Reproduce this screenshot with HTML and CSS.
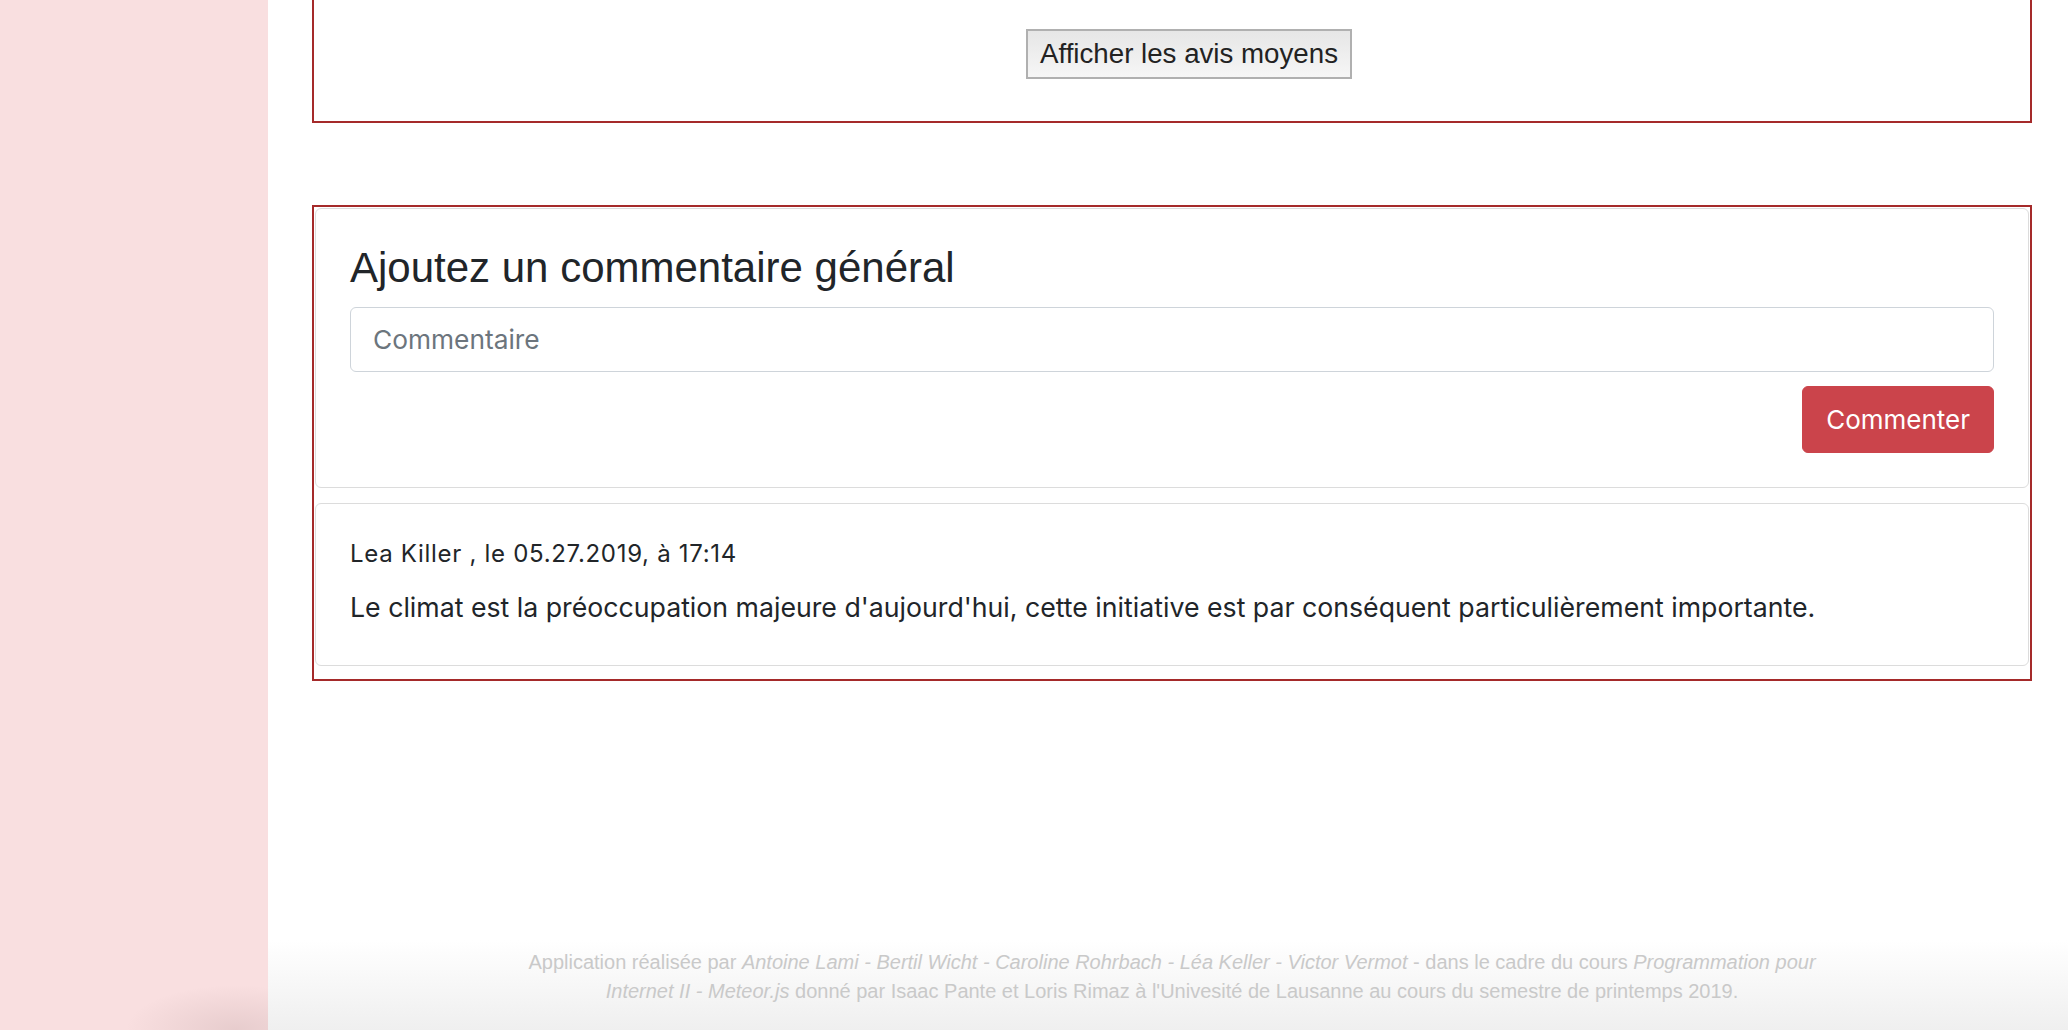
FILE: index.html
```
<!DOCTYPE html>
<html lang="fr">
<head>
<meta charset="utf-8">
<title>Commentaires</title>
<link rel="stylesheet" href="styles.css">
</head>
<body>
<div class="page">
  <aside class="sidebar"></aside>
  <div class="main">
    <section class="box box-top">
      <div class="center-row">
        <button class="legacy-btn" type="button">Afficher les avis moyens</button>
      </div>
    </section>

    <section class="box box-comments">
      <div class="card form-card">
        <h3 class="card-heading">Ajoutez un commentaire général</h3>
        <input class="comment-input" type="text" placeholder="Commentaire">
        <div class="actions">
          <button class="btn-danger" type="button">Commenter</button>
        </div>
      </div>
      <div class="card comment-card">
        <p class="comment-meta">Lea Killer , le 05.27.2019, à 17:14</p>
        <p class="comment-body">Le climat est la préoccupation majeure d'aujourd'hui, cette initiative est par conséquent particulièrement importante.</p>
      </div>
    </section>

    <footer class="site-footer">
      <p class="credits">Application réalisée par <em>Antoine Lami - Bertil Wicht - Caroline Rohrbach - Léa Keller - Victor Vermot</em> - dans le cadre du cours <em>Programmation pour Internet II - Meteor.js</em> donné par Isaac Pante et Loris Rimaz à l'Univesité de Lausanne au cours du semestre de printemps 2019.</p>
    </footer>
  </div>
</div>
</body>
</html>
```

FILE: styles.css
```
* {
  box-sizing: border-box;
}

html, body {
  margin: 0;
  padding: 0;
  height: 100%;
  overflow: hidden;
}

body {
  font-family: "Inter", "Liberation Sans", Arial, sans-serif;
  color: #212529;
  background: #ffffff;
}

.page {
  display: flex;
  min-height: 100vh;
}

.sidebar {
  flex: 0 0 268px;
  background:
    radial-gradient(ellipse 110px 45px at 88% 100%, rgba(120, 90, 90, 0.14), rgba(120, 90, 90, 0) 100%),
    #f9dfe0;
}

.main {
  flex: 1 1 auto;
  display: flex;
  flex-direction: column;
  padding: 0 36px 0 44px;
  min-width: 0;
}

.box {
  border: 2px solid #a52a2a;
}

.box-top {
  margin-top: -40px;
  padding: 67px 0 42px;
}

.center-row {
  display: flex;
  justify-content: center;
  padding-left: 34px;
}

.legacy-btn {
  height: 50px;
  padding: 0 12px;
  font-family: "Liberation Sans", Arial, sans-serif;
  font-size: 27.7px;
  color: #222222;
  border: 2px solid #b0b0b0;
  border-radius: 0;
  background: linear-gradient(#e6e6e6, #f6f6f6);
}

.box-comments {
  margin-top: 82px;
  padding: 1px 1px 13px;
}

.card {
  border: 1px solid #dcdcdc;
  border-radius: 6px;
  background: #ffffff;
}

.form-card {
  padding: 34px 34px 34px;
  margin-bottom: 15px;
}

.card-heading {
  margin: 0 0 14px;
  font-family: "Liberation Sans", Arial, sans-serif;
  font-weight: 400;
  font-size: 42px;
  line-height: 50px;
  color: #212529;
}

.comment-input {
  display: block;
  width: 100%;
  height: 65px;
  padding: 0 22px;
  font-family: "Inter", "Liberation Sans", sans-serif;
  font-size: 26.3px;
  color: #495057;
  border: 1px solid #ced4da;
  border-radius: 6px;
  background: #ffffff;
  outline: none;
}

.comment-input::placeholder {
  color: #6c757d;
}

.actions {
  display: flex;
  justify-content: flex-end;
  margin-top: 14px;
}

.btn-danger {
  height: 67px;
  padding: 0 23px;
  font-family: "Inter", "Liberation Sans", sans-serif;
  font-size: 26px;
  color: #ffffff;
  background: #cb444b;
  border: 1px solid #cb444b;
  border-radius: 6px;
}

.comment-card {
  padding: 32px 34px 37px;
}

.comment-meta {
  margin: 0 0 14px;
  font-size: 24px;
  letter-spacing: 0.7px;
  line-height: 36px;
  color: #212529;
}

.comment-body {
  margin: 0;
  font-size: 26.7px;
  line-height: 42px;
  color: #212529;
}

.site-footer {
  margin-top: auto;
  margin-left: -44px;
  margin-right: -36px;
  padding: 8px 0 24px;
  background: linear-gradient(#ffffff, #efefef);
  display: flex;
  justify-content: center;
}

.credits {
  margin: 0 0 0 8px;
  max-width: 1310px;
  text-align: center;
  font-family: "Liberation Sans", Arial, sans-serif;
  font-size: 20px;
  line-height: 29px;
  color: #c9c9c9;
}

.credits em {
  font-style: italic;
}
```
